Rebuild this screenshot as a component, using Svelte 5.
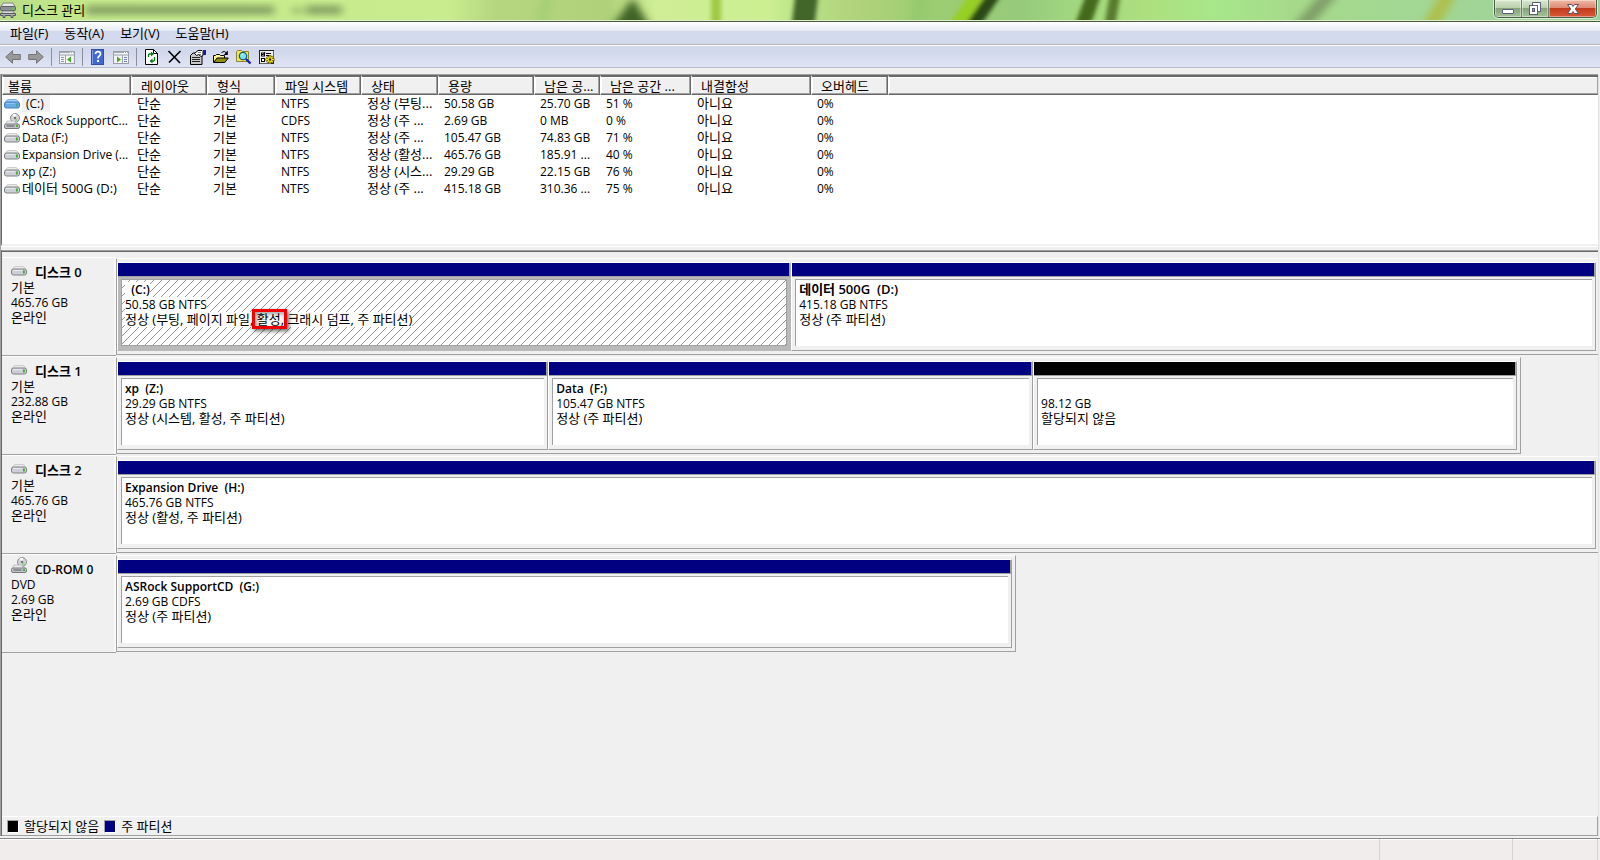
<script lang="ts">
  type Volume = {
    name: string;
    kind: "disk" | "cd";
    cells: string[];
    selected?: boolean;
  };

  type Partition = {
    name: string;
    size: string;
    status: string;
    mark?: string;
    statusEnd?: string;
    share: number;
    free?: boolean;
    selected?: boolean;
  };

  type Disk = {
    name: string;
    kind: "disk" | "cd";
    type: string;
    size: string;
    state: string;
    width: number;
    partitions: Partition[];
  };

  const menus = ["파일(F)", "동작(A)", "보기(V)", "도움말(H)"];

  const tools = [
    ["back", "뒤로"],
    ["forward", "앞으로"],
    ["sep", ""],
    ["tree", "콘솔 트리 표시/숨기기"],
    ["sep", ""],
    ["help", "도움말"],
    ["actions", "작업 창 표시/숨기기"],
    ["sep", ""],
    ["refresh", "새로 고침"],
    ["delete", "삭제"],
    ["props", "속성"],
    ["open", "열기"],
    ["search", "탐색"],
    ["settings", "설정"],
  ];

  const columns = [
    { label: "볼륨", width: 129 },
    { label: "레이아웃", width: 76 },
    { label: "형식", width: 68 },
    { label: "파일 시스템", width: 86 },
    { label: "상태", width: 77 },
    { label: "용량", width: 96 },
    { label: "남은 공...", width: 66 },
    { label: "남은 공간 ...", width: 91 },
    { label: "내결함성", width: 120 },
    { label: "오버헤드", width: 77 },
  ];

  const volumes: Volume[] = [
    { name: "(C:)", kind: "disk", selected: true, cells: ["단순", "기본", "NTFS", "정상 (부팅...", "50.58 GB", "25.70 GB", "51 %", "아니요", "0%"] },
    { name: "ASRock SupportC...", kind: "cd", cells: ["단순", "기본", "CDFS", "정상 (주 ...", "2.69 GB", "0 MB", "0 %", "아니요", "0%"] },
    { name: "Data (F:)", kind: "disk", cells: ["단순", "기본", "NTFS", "정상 (주 ...", "105.47 GB", "74.83 GB", "71 %", "아니요", "0%"] },
    { name: "Expansion Drive (...", kind: "disk", cells: ["단순", "기본", "NTFS", "정상 (활성...", "465.76 GB", "185.91 ...", "40 %", "아니요", "0%"] },
    { name: "xp (Z:)", kind: "disk", cells: ["단순", "기본", "NTFS", "정상 (시스...", "29.29 GB", "22.15 GB", "76 %", "아니요", "0%"] },
    { name: "데이터 500G (D:)", kind: "disk", cells: ["단순", "기본", "NTFS", "정상 (주 ...", "415.18 GB", "310.36 ...", "75 %", "아니요", "0%"] },
  ];

  const disks: Disk[] = [
    {
      name: "디스크 0", kind: "disk", type: "기본", size: "465.76 GB", state: "온라인", width: 100,
      partitions: [
        { name: "  (C:)", size: "50.58 GB NTFS", status: "정상 (부팅, 페이지 파일, ", mark: "활성,", statusEnd: " 크래시 덤프, 주 파티션)", share: 674, selected: true },
        { name: "데이터 500G  (D:)", size: "415.18 GB NTFS", status: "정상 (주 파티션)", share: 805 },
      ],
    },
    {
      name: "디스크 1", kind: "disk", type: "기본", size: "232.88 GB", state: "온라인", width: 94.8,
      partitions: [
        { name: "xp  (Z:)", size: "29.29 GB NTFS", status: "정상 (시스템, 활성, 주 파티션)", share: 431 },
        { name: "Data  (F:)", size: "105.47 GB NTFS", status: "정상 (주 파티션)", share: 485 },
        { name: "", size: "98.12 GB", status: "할당되지 않음", share: 484, free: true },
      ],
    },
    {
      name: "디스크 2", kind: "disk", type: "기본", size: "465.76 GB", state: "온라인", width: 100,
      partitions: [
        { name: "Expansion Drive  (H:)", size: "465.76 GB NTFS", status: "정상 (활성, 주 파티션)", share: 1 },
      ],
    },
    {
      name: "CD-ROM 0", kind: "cd", type: "DVD", size: "2.69 GB", state: "온라인", width: 60.7,
      partitions: [
        { name: "ASRock SupportCD  (G:)", size: "2.69 GB CDFS", status: "정상 (주 파티션)", share: 1 },
      ],
    },
  ];

  const hangul = (text: string) => /[가-힣]/.test(text);
</script>

{#snippet driveIcon(kind: string, blue = false)}
  {#if kind === "cd"}
    <svg class="drive" width="16" height="16" viewBox="0 0 16 16" aria-hidden="true">
      <circle cx="11" cy="5" r="4.5" fill="#d4d6dc" stroke="#8b8b8b" />
      <path d="M11 5 8.5 1.5A4 4 0 0 1 12 1z" fill="#fff" />
      <path d="M11 5l3.5 2A4 4 0 0 1 11 9z" fill="#9fd09b" />
      <circle cx="11" cy="5" r="1.3" fill="#777" />
      <path d="M3 8h7l2 2h1l2 2H1z" fill="#ececef" stroke="#a2a2a6" stroke-width=".6" />
      <rect x=".5" y="11" width="15" height="4.5" rx="1.5" fill="#c3c5cc" stroke="#77787d" />
      <path d="M2.5 13h8" stroke="#55565c" />
      <rect x="12" y="12" width="2" height="2" fill="#3cbe2c" />
    </svg>
  {:else}
    <svg class="drive" width="16" height="10" viewBox="0 0 16 10" aria-hidden="true">
      <path d="M4 .5h8q1 0 3 3H1q2-3 3-3z" fill={blue ? "#a4d0f5" : "#ececec"} stroke={blue ? "#5a9bd8" : "#bdbdbd"} stroke-width=".7" />
      <rect x=".5" y="3" width="15" height="6" rx="2" fill={blue ? "#69a9e8" : "#cdcfd8"} stroke={blue ? "#3f7fbe" : "#808083"} />
      <path d="M2 4.5h9" stroke={blue ? "#93c5f3" : "#e8e9ef"} />
      <rect x="12" y="4.500" width="1.800" height="3" fill={blue ? "#3fae8a" : "#36b321"} />
    </svg>
  {/if}
{/snippet}

{#snippet toolIcon(id: string)}
  <svg width="16" height="16" viewBox="0 0 16 16" aria-hidden="true">
    {#if id === "back" || id === "forward"}
      <path
        d="M.7 8 7.5 1.8v3.7h7.8v5H7.5v3.7z"
        transform={id === "forward" ? "matrix(-1 0 0 1 16 0)" : undefined}
        fill="#999"
        stroke="#747474"
        stroke-linejoin="round"
      />
    {:else if id === "tree" || id === "actions"}
      <rect x=".5" y="2.5" width="15" height="12" fill="#f3f3f3" stroke="#999ea7" />
      <path d="M1 3.5h14" stroke="#a7abb4" />
      <path d="M11 3.5h1m1 0h1" stroke="#fff" />
      <path d="M1 6h14" stroke="#9aa0ac" />
      {#if id === "tree"}
        <path d="M2 8.5h3m-3 2h3m-3 2h3" stroke="#8c98a8" />
        <path d="M6.5 6v8" stroke="#a0a6b2" />
        <path d="M12 7.500v6l-4-3z" fill="#4aa32e" />
      {:else}
        <path d="M11 8.500h3m-3 2h3m-3 2h3" stroke="#6d87ad" />
        <path d="M9.500 6v8" stroke="#a0a6b2" />
        <path d="M4 7.500v6l4-3z" fill="#4aa32e" />
      {/if}
    {:else if id === "help"}
      <rect x="1.500" y=".5" width="12" height="15" fill="#4368d0" stroke="#3150a4" />
      <path d="M2.500 1v14" stroke="#7f9cec" />
      <path d="M5.500 5q0-2.300 2.500-2.300T10.500 5q0 1.300-1.500 2.200-1 .7-1 2.300" fill="none" stroke="#fff" stroke-width="1.700" />
      <rect x="7" y="11" width="2" height="2" fill="#fff" />
    {:else if id === "refresh"}
      <path d="M1.500.5h8l4 4v11h-12z" fill="#fff" stroke="#000" />
      <path d="M9.500.5v4h4" fill="none" stroke="#000" />
      <path d="M4.500 8V6q0-1 1-1H8M10.500 8v3q0 1-1 1H7" fill="none" stroke="#0a7a16" stroke-width="1.300" />
      <path d="M7 2.500v5L10 5zM8.500 9.500v5L5.500 12z" fill="#0a7a16" />
    {:else if id === "delete"}
      <path d="M1.500 2 13 14M13.500 2 2 13.500" fill="none" stroke="#000" stroke-width="1.600" />
    {:else if id === "props"}
      <path d="M.5 15.500v-9L3 4h8l1 2v9.500z" fill="#c8c8c8" stroke="#000" />
      <path d="M2 8.500h8m-8 2h8m-8 2h8" stroke="#222" />
      <path d="M4.500 4.500 8 1.500h4l1 1v4l-2 1-2.500-2-2 1z" fill="#fff" stroke="#000" />
      <path d="M8 3.500h3M9 5.500h2" stroke="#777" />
      <path d="M13 1h3v5h-3z" fill="#1b1c92" />
    {:else if id === "open"}
      <path d="M.5 13.500v-7h2l1-1h3l1 1h4v3" fill="#fff29a" stroke="#000" />
      <path d="M.7 13.500 4 9h11.300l-3.500 4.500z" fill="#8f8e12" stroke="#000" />
      <path d="M8.500 3.500q3-2.500 5 .5" fill="none" stroke="#000" />
      <path d="M14.800 1.500V6h-4z" fill="#000" />
    {:else if id === "search"}
      <path d="M.5 12.500v-10l1-1h4l1 1h6v10z" fill="#f4e74b" stroke="#8c8430" />
      <circle cx="7" cy="7" r="3.700" fill="#77e6f2" stroke="#15607a" stroke-width="1.200" />
      <path d="M5.500 6q.5-1 1.500-1" stroke="#fff" fill="none" />
      <path d="m10 10 4.500 4.500" stroke="#1620b8" stroke-width="2.400" />
    {:else if id === "settings"}
      <rect x=".5" y="1.500" width="14" height="13" fill="#ededed" stroke="#222" />
      <path d="M14.500 2v8M1 14.500h9" stroke="#666" />
      <rect x="2.500" y="4" width="3" height="3" fill="#fff" stroke="#000" />
      <rect x="2.500" y="9.500" width="3" height="3" fill="#fff" stroke="#000" />
      <path d="M7 4.500h5M7 6.500h4M3 5l1 1 2-3" stroke="#000" fill="none" />
      <path d="M11 6v9M6.500 10.500h9M8 7.500l6 6M14 7.500l-6 6" stroke="#4d4700" stroke-width="2.400" />
      <path d="M11 6.500v8M7 10.500h8M8.300 7.800l5.400 5.400M13.700 7.800l-5.400 5.400" stroke="#f4e410" stroke-width="1.300" />
      <circle cx="11" cy="10.500" r="1.200" fill="#222" />
    {/if}
  </svg>
{/snippet}

<div class="window">
  <header class="titlebar">
    <svg class="glass" viewBox="0 0 1600 21" preserveAspectRatio="none" aria-hidden="true">
      <defs>
        <linearGradient id="glass">
          <stop offset="0" stop-color="#b9dc86" />
          <stop offset=".05" stop-color="#c4e98a" />
          <stop offset=".28" stop-color="#c9ed8e" />
          <stop offset=".31" stop-color="#b6d57f" />
          <stop offset=".38" stop-color="#b0d17a" />
          <stop offset=".41" stop-color="#d0ee95" />
          <stop offset=".48" stop-color="#ccef92" />
          <stop offset=".5" stop-color="#b9e487" />
          <stop offset=".53" stop-color="#b2d47c" />
          <stop offset=".58" stop-color="#9dcd72" />
          <stop offset=".64" stop-color="#96cb7c" />
          <stop offset=".67" stop-color="#a0d77e" />
          <stop offset=".72" stop-color="#aee07e" />
          <stop offset=".76" stop-color="#a7e78b" />
          <stop offset=".81" stop-color="#a6d98a" />
          <stop offset=".88" stop-color="#a2d893" />
          <stop offset="1" stop-color="#9dcfa0" />
        </linearGradient>
        <filter id="soft" x="-50%" y="-50%" width="200%" height="200%"><feGaussianBlur stdDeviation="2" /></filter>
        <filter id="softer" x="-50%" y="-50%" width="200%" height="200%"><feGaussianBlur stdDeviation="4" /></filter>
      </defs>
      <rect width="1600" height="21" fill="url(#glass)" />
      <g filter="url(#softer)">
        <path d="M603 40 633-2l24 42z" fill="#3f6327" />
        <path d="M542 40 555-20h-8l-12 60z" fill="#a0ce70" />
        <path d="M1282 40 1332-20h18l-50 60z" fill="#7f9f68" />
        <path d="M1415 40 1448-20h16l-32 60z" fill="#aebf4c" />
        <path d="M908 40 915-20h20l-10 60z" fill="#95ca70" />
      </g>
      <g filter="url(#soft)">
        <path d="M711-20h10v60h-10z" fill="#a0c944" />
        <path d="M790 40 797-20h23l-7 60z" fill="#43652a" />
        <path d="M940 40 978-20h17l-38 60z" fill="#98cf25" />
        <path d="M956 40 996-20h15l-39 60z" fill="#2c4a16" />
        <path d="M1070 40 1091-20h15l-20 60z" fill="#45691f" />
        <path d="M1102 40 1112-20h11l-10 60z" fill="#587c2d" />
      </g>
      <g filter="url(#softer)" fill="#77905a" opacity=".85">
        <path d="M86 6h188v9H86zM292 9h10v4h-10zM306 6h36v9h-36z" />
      </g>
    </svg>
    <svg class="app-icon" width="16" height="16" viewBox="0 0 16 16" aria-hidden="true">
      <path d="M3 1h10l2 4H1z" fill="#e5e6e8" stroke="#85878b" />
      <rect x=".5" y="4.500" width="15" height="4" rx="1" fill="#8d8f94" stroke="#5d5f62" />
      <rect x="12" y="5.500" width="2" height="2" fill="#46d53a" />
      <path d="M3 9h10l2 3H1z" fill="#d9dbde" stroke="#85878b" />
      <path d="M.5 11.500h15v2H13v2h-2v-2H5v2H3v-2H.5z" fill="#b0b2b7" stroke="#56585b" />
    </svg>
    <h1>디스크 관리</h1>
    <div class="controls">
      <button type="button" aria-label="최소화">
        <svg width="14" height="14" viewBox="0 0 14 14" aria-hidden="true">
          <rect x="1.500" y="7.500" width="11" height="4" rx=".5" fill="#fff" stroke="#5a5d78" />
        </svg>
      </button>
      <button type="button" aria-label="이전 크기로 복원">
        <svg width="14" height="14" viewBox="0 0 14 14" aria-hidden="true">
          <path d="M4.500.5h8v9h-8z" fill="#fff" stroke="#5a5d78" />
          <rect x="1.500" y="3.500" width="8" height="9" fill="#fff" stroke="#5a5d78" />
          <rect x="4.500" y="6.500" width="2" height="3" fill="#8fa888" stroke="#5a5d78" />
        </svg>
      </button>
      <button type="button" class="close" aria-label="닫기">
        <svg width="14" height="14" viewBox="0 0 14 14" aria-hidden="true">
          <path d="M1.500 2.500h4L7 4.500l1.500-2h4L9.300 7l3.200 4.500h-4L7 9.500l-1.500 2h-4L4.700 7z" fill="#fff" stroke="#5a4f66" />
        </svg>
      </button>
    </div>
  </header>

  <nav class="menubar">
    {#each menus as menu}
      <button type="button">{menu}</button>
    {/each}
  </nav>

  <div class="toolbar" role="toolbar" aria-label="도구 모음">
    {#each tools as [id, label]}
      {#if id === "sep"}
        <span class="sep"></span>
      {:else}
        <button type="button" aria-label={label}>{@render toolIcon(id)}</button>
      {/if}
    {/each}
  </div>

  <main>
    <section class="volumes">
      <table>
        <colgroup>
          {#each columns as column}
            <col style={`width: ${column.width}px`} />
          {/each}
          <col />
        </colgroup>
        <thead>
          <tr>
            {#each columns as column}
              <th scope="col">{column.label}</th>
            {/each}
            <td class="filler"></td>
          </tr>
        </thead>
        <tbody>
          {#each volumes as volume}
            <tr>
              <td class="volume">
                <div>
                  {@render driveIcon(volume.kind, volume.selected)}
                  <span class:hangul={hangul(volume.name)} class:selected={volume.selected}>{volume.name}</span>
                </div>
              </td>
              {#each volume.cells as cell}
                <td class:hangul={hangul(cell)}>{cell}</td>
              {/each}
              <td></td>
            </tr>
          {/each}
        </tbody>
      </table>
    </section>

    <div class="splitter"></div>

    <section class="graph">
      <div class="disks">
        {#each disks as disk}
          <div class="disk">
            <div class="disk-info">
              <h2 class:hangul={hangul(disk.name)}>
                {@render driveIcon(disk.kind)}
                {disk.name}
              </h2>
              <p class:hangul={hangul(disk.type)}>{disk.type}</p>
              <p>{disk.size}</p>
              <p class="hangul">{disk.state}</p>
            </div>
            <div class="track">
              <div class="partitions" class:full={disk.width === 100} style={`width: ${disk.width}%`}>
                {#each disk.partitions as part}
                  <div class="partition" class:selected={part.selected} style={`flex-grow: ${part.share}`}>
                    <div class="bar" class:free={part.free}></div>
                    <div class="body">
                      <p class="name" class:hangul={hangul(part.name)}><span>{part.name}</span></p>
                      <p><span>{part.size}</span></p>
                      <p class="hangul"><span>{part.status}{#if part.mark}<mark>{part.mark}</mark>{part.statusEnd}{/if}</span></p>
                    </div>
                  </div>
                {/each}
              </div>
            </div>
          </div>
        {/each}
      </div>
      <div class="legend">
        <span class="swatch free"></span>
        <span>할당되지 않음</span>
        <span class="swatch"></span>
        <span>주 파티션</span>
      </div>
    </section>
  </main>

  <footer>
    <span class="message"></span>
    <span class="slot"></span>
    <span class="slot last"></span>
  </footer>
</div>

<style>
  :global(body) {
    margin: 0;
  }

  .window {
    display: flex;
    flex-direction: column;
    min-height: 100vh;
    background: #f0f0f0;
    color: #000;
    font: 12px/15px "Open Sans", "Noto Sans CJK KR", sans-serif;
  }

  h1,
  h2,
  p {
    margin: 0;
    font-size: inherit;
    font-weight: normal;
  }

  button {
    padding: 0;
    border: 0;
    background: none;
    color: inherit;
    font: inherit;
  }

  svg {
    display: block;
    flex: none;
  }

  .window .hangul,
  .menubar,
  .legend,
  th,
  h1 {
    font-size: 13px;
  }

  .titlebar {
    position: relative;
    display: flex;
    align-items: center;
    height: 20px;
    padding-bottom: 1px;
    border-bottom: 1px solid #4c5a42;
    box-shadow: inset 0 -1px #dcefc8;
  }

  .glass {
    position: absolute;
    inset: 0;
    width: 100%;
    height: 20px;
  }

  .app-icon,
  h1 {
    position: relative;
  }

  h1 {
    margin-left: 6px;
  }

  .controls {
    position: relative;
    display: flex;
    align-self: flex-start;
    height: 17px;
    margin: 0 3px 0 auto;
    border: solid #4b5c48;
    border-width: 0 1px 1px;
    border-radius: 0 0 5px 5px;
    box-shadow: 0 0 0 1px #d8efd0;
    overflow: hidden;
  }

  .controls button {
    display: flex;
    align-items: center;
    justify-content: center;
    width: 27px;
    border-right: 1px solid #6c8368;
    background: linear-gradient(#d9e8cf, #b9d0ab 45%, #86a37a 50%, #a5c49a);
    box-shadow: inset 0 0 0 1px #ffffff66;
  }

  .controls .close {
    width: 47px;
    border-right: 0;
    background: linear-gradient(#f0b9a6, #df8b75 45%, #c23b1d 50%, #d8593a);
  }

  .menubar {
    display: flex;
    gap: 16px;
    height: 22px;
    padding-left: 10px;
    border-bottom: 1px solid #b2b5b2;
    background: linear-gradient(#fff, #e6ebf5 40%, #d4daed 42%, #d4daed);
  }

  .toolbar {
    display: flex;
    align-items: center;
    height: 21px;
    padding-left: 2px;
    border-top: 1px solid #fff;
    border-bottom: 1px solid #b4bccd;
    background: linear-gradient(#d3d9ec 30%, #dfe5f5);
  }

  .toolbar button {
    width: 23px;
    padding-left: 3px;
  }

  .sep {
    width: 1px;
    height: 18px;
    margin: 0 4px 0 3px;
    background: #8b8f9a;
  }

  main {
    display: flex;
    flex: 1;
    flex-direction: column;
    margin: 6px 1px 2px 0;
    border-left: 1px solid #a0a0a0;
    border-right: 1px solid #e3e3e3;
  }

  .volumes {
    padding-bottom: 47px;
    border-top: 1px solid #a0a0a0;
    border-left: 1px solid #696969;
    border-bottom: 2px solid #f0f0f0;
    background: #fff;
    box-shadow: inset 0 1px #696969;
  }

  table {
    width: 100%;
    border-spacing: 0;
    table-layout: fixed;
  }

  th,
  td {
    height: 17px;
    padding: 0 0 0 6px;
    line-height: 17px;
    overflow: hidden;
    text-align: left;
    white-space: nowrap;
  }

  th,
  .filler {
    box-sizing: border-box;
    height: 20px;
    padding-left: 9px;
    border: 1px solid #fff;
    border-top: 2px solid #696969;
    border-right-color: #696969;
    border-bottom-color: #696969;
    background: #f0f0f0;
    box-shadow: inset -1px -1px #a0a0a0, inset 1px 1px #fff;
    font-weight: normal;
    line-height: 16px;
  }

  th:first-child {
    padding-left: 5px;
  }

  .filler {
    border-right: 0;
  }

  .volume {
    padding-left: 2px;
  }

  .volume div {
    display: flex;
    align-items: center;
    gap: 2px;
    height: 17px;
  }

  .volume .selected {
    padding: 0 6px 0 4px;
    background: #f0f0f0;
  }

  .splitter {
    height: 3px;
    border-top: 1px solid #fff;
  }

  .graph {
    display: flex;
    flex: 1;
    flex-direction: column;
    border-top: 1px solid #a0a0a0;
    border-left: 1px solid #696969;
    box-shadow: inset 0 1px #696969;
  }

  .disks {
    flex: 1;
    padding-top: 6px;
  }

  .disk {
    display: flex;
  }

  .disk-info {
    box-sizing: border-box;
    width: 114px;
    height: 99px;
    padding: 6px 0 0 9px;
    border-top: 1px solid #fff;
    border-bottom: 1px solid #a0a0a0;
    box-shadow: inset -2px 0 #f8f8f8;
  }

  h2 {
    display: flex;
    align-items: flex-end;
    gap: 8px;
    height: 16px;
    font-weight: 600;
  }

  h2 .drive {
    margin-bottom: 4px;
  }

  .track {
    flex: 1;
    min-width: 0;
  }

  .partitions {
    box-sizing: border-box;
    display: flex;
    height: 97px;
    margin-top: 1px;
    padding: 3px 3px 3px 0;
    border: 1px solid #a0a0a0;
    border-top-color: #fff;
  }

  .partitions.full {
    padding-right: 2px;
    border-right: 0;
  }

  .partition {
    display: flex;
    flex: 1 1 0;
    flex-direction: column;
    min-width: 0;
    border: 1px solid #fff;
    border-right-color: #a0a0a0;
    border-bottom-color: #a0a0a0;
  }

  .bar {
    height: 13px;
    border-right: 1px solid #a0a0a0;
    border-bottom: 1px solid #a0a0a0;
    background: #000080;
  }

  .free {
    background: #000;
  }

  .body {
    flex: 1;
    margin: 2px 3px 4px;
    padding: 2px 0 0 3px;
    overflow: hidden;
    border-top: 1px solid #a0a0a0;
    border-left: 1px solid #a0a0a0;
    background: #fff;
  }

  .partition.selected {
    border-right-color: #b9b9b9;
    border-bottom-color: #b9b9b9;
    background: #b9b9b9;
  }

  .partition.selected .body {
    border: 1px solid #a0a0a0;
    background: linear-gradient(135deg, #fff 46%, #969696 48%, #969696 52%, #fff 54%) 0 0 / 8px 8px;
  }

  .body p {
    height: 15px;
    white-space: pre;
  }

  .name {
    font-weight: 600;
  }

  .selected .body span {
    display: inline-block;
    background: #fff;
  }

  mark {
    position: relative;
    background: none;
    color: inherit;
  }

  mark::after {
    content: "";
    position: absolute;
    inset: -1px -3px -1px -5px;
    border: 3px solid #f00000;
    box-shadow: 2px 2px 4px #0009, inset 2px 2px 5px #0006;
  }

  .legend {
    display: flex;
    align-items: center;
    gap: 5px;
    height: 18px;
    padding-left: 5px;
    border: solid #a0a0a0;
    border-width: 1px 1px 1px 0;
    border-top-color: #fff;
  }

  .swatch {
    width: 10px;
    height: 11px;
    border: 1px solid #a0a0a0;
    border-right-color: #fff;
    border-bottom-color: #fff;
    background: #000080;
  }

  .swatch.free {
    background: #000;
  }

  footer {
    display: flex;
    height: 21px;
    border-top: 1px solid #868a86;
    background: #f1edec;
    box-shadow: inset 0 1px #fff;
  }

  .message {
    flex: 1;
  }

  .slot {
    width: 132px;
    border-left: 1px solid #d7d3d3;
  }

  .slot.last {
    width: 84px;
    margin-right: 2px;
    border-right: 1px solid #d7d3d3;
  }
</style>
